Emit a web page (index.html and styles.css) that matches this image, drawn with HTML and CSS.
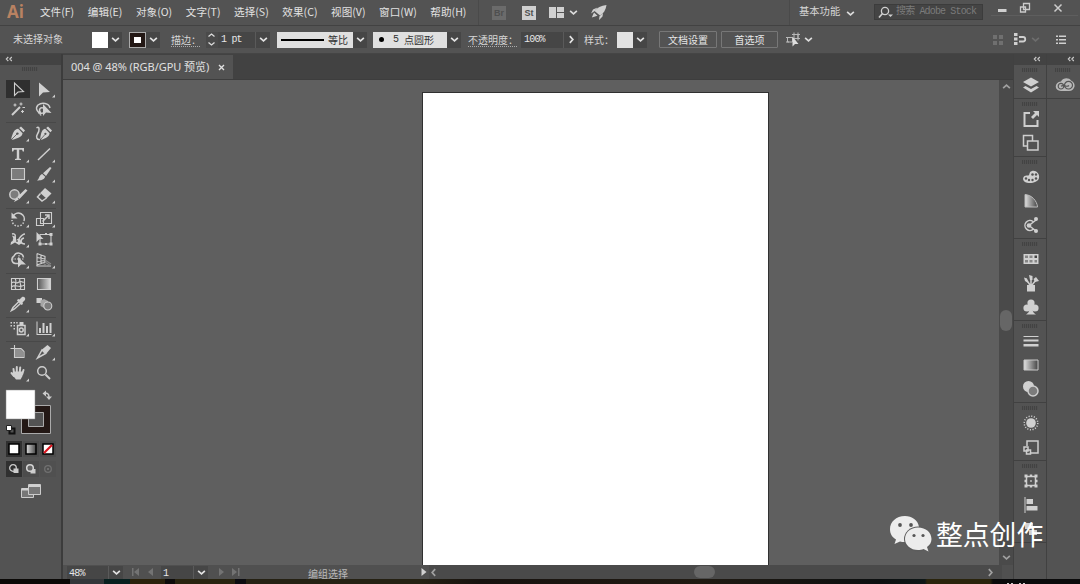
FILE: index.html
```html
<!DOCTYPE html>
<html lang="zh-CN">
<head>
  <meta charset="UTF-8">
  <title>004 @ 48%</title>
  <link rel="stylesheet" href="styles.css">
</head>
<body>

  <!-- Shared symbols -->
  <svg class="defs" width="0" height="0">
    <defs>
      <symbol id="chev" viewBox="0 0 8 8"><path d="M1 2.5 L4 5.2 L7 2.5" fill="none" stroke="currentColor" stroke-width="1.5"/></symbol>
      <symbol id="dbl" viewBox="0 0 8 6"><path d="M3.3 1 L1.3 3 L3.3 5 M6.8 1 L4.8 3 L6.8 5" fill="none" stroke="currentColor" stroke-width="1.1"/></symbol>
      <symbol id="more" viewBox="-13 -10 26 20"><path d="M11 5.500 V8.500 H8Z"/></symbol>
      <linearGradient id="gradH"><stop offset="0" stop-color="#5a5a5a"/><stop offset="1" stop-color="#d5d5d5"/></linearGradient>
      <linearGradient id="gradD"><stop offset="0" stop-color="#e0e0e0"/><stop offset="1" stop-color="#444"/></linearGradient>
    </defs>
  </svg>

  <!-- Menu bar -->
  <header class="menubar">
    <div class="logo">Ai</div>
    <ul class="menu">
      <li>文件(F)</li>
      <li>编辑(E)</li>
      <li>对象(O)</li>
      <li>文字(T)</li>
      <li>选择(S)</li>
      <li>效果(C)</li>
      <li>视图(V)</li>
      <li>窗口(W)</li>
      <li>帮助(H)</li>
    </ul>
    <div class="apps">
      <span class="app dim">Br</span>
      <span class="app">St</span>
      <svg class="layout-icon" width="16" height="11" viewBox="0 0 16 11"><path d="M0 0H7V11H0Z M8 0H15V5H8Z M8 6H15V11H8Z"/></svg>
      <svg class="chev" width="9" height="9"><use href="#chev"/></svg>
      <svg class="rocket" width="16" height="15" viewBox="0 0 16 15"><path d="M15.500 0 C10 .5 6 2.500 3.500 6 L9 10.500 C12.500 8.500 14.800 5 15.500 0Z M6.500 2.500 L2 4.500 L0 8.500 L3 6.500Z M12 8.500 L11.500 11.500 L8 15 L8.500 11.200Z M3 7.500 L.8 12.500 L6.500 10.800Z"/></svg>
    </div>
    <div class="workspace">基本功能<svg class="chev" width="9" height="9"><use href="#chev"/></svg></div>
    <div class="search">
      <svg width="16" height="13" viewBox="0 0 16 13"><circle cx="7" cy="5" r="3.600" fill="none" stroke="#d0d0d0" stroke-width="1.300"/><path d="M4.500 7.500 L1 11.500" stroke="#d0d0d0" stroke-width="1.700"/><path d="M10 8.500H15L12.500 11Z"/></svg>
      <span>搜索 Adobe Stock</span>
    </div>
    <div class="window-buttons">
      <span><svg width="12" height="12" viewBox="0 0 12 12"><path d="M2 7H10.500V10H2Z"/></svg></span>
      <span class="mid"><svg width="12" height="12" viewBox="0 0 12 12"><path d="M4.500 1.500H10.500V7.500H4.500Z M1.500 5H6.500V10H1.500Z" fill="none" stroke="#ccc" stroke-width="1.300"/></svg></span>
      <span class="wide"><svg width="12" height="12" viewBox="0 0 12 12"><path d="M2.500 2.500 L9.500 9.500 M9.500 2.500 L2.500 9.500" stroke="#ccc" stroke-width="1.500"/></svg></span>
    </div>
  </header>

  <!-- Control bar -->
  <div class="controls">
    <span class="selection">未选择对象</span>
    <span class="swatch"></span><span class="dd"><svg width="9" height="9"><use href="#chev"/></svg></span>
    <span class="swatch stroke"></span><span class="dd"><svg width="9" height="9"><use href="#chev"/></svg></span>
    <span class="link label-stroke">描边：</span>
    <span class="spin"><svg width="9" height="15" viewBox="0 0 9 15"><path d="M1.500 4.500L4.500 2L7.500 4.500 M1.500 10.500L4.500 13L7.500 10.500" fill="none" stroke="#ddd" stroke-width="1.300"/></svg></span>
    <span class="field pt">1 pt</span><span class="dd"><svg width="9" height="9"><use href="#chev"/></svg></span>
    <span class="preview profile"><i class="line"></i>等比</span><span class="dd"><svg width="9" height="9"><use href="#chev"/></svg></span>
    <span class="preview brush"><i class="dot"></i><b>5</b>点圆形</span><span class="dd"><svg width="9" height="9"><use href="#chev"/></svg></span>
    <span class="link label-opacity">不透明度：</span>
    <span class="field opacity">100%</span><span class="dd right"><svg width="9" height="9"><use href="#chev"/></svg></span>
    <span class="label-style">样式：</span>
    <span class="swatch style"></span><span class="dd"><svg width="9" height="9"><use href="#chev"/></svg></span>
    <button class="doc">文档设置</button>
    <button>首选项</button>
    <svg class="similar" width="15" height="15" viewBox="0 0 15 15"><path d="M1.500 5.500H6.500V10H1.500Z M8 2.500H12V6.500H8Z M8 .5V2.500 M12 .5V8.500 M6 2.500H14 M0 5.500H2 M0 10H3 M10 6.500H14" fill="none" stroke="#b8b8b8"/><path d="M6.500 4.500V14.500L9 12L12.500 12Z" fill="#ddd"/></svg>
    <svg class="chev" width="9" height="9"><use href="#chev"/></svg>
    <svg class="snap-grid" width="12" height="12" viewBox="0 0 12 12"><path d="M1 1H5V5H1Z M7 1H11V5H7Z M1 7H5V11H1Z M7 7H11V11H7Z"/></svg>
    <svg class="snap" width="14" height="13" viewBox="0 0 14 13"><path d="M1 0H4.500V3H1Z M1 4.500H4.500V7.500H1Z M1 9H4.500V12H1Z"/><path d="M6 4H10A2 2 0 0 1 10 8.500H6" fill="none" stroke="#d0d0d0" stroke-width="1.800"/></svg>
    <svg class="chev dim" width="9" height="9"><use href="#chev"/></svg>
    <svg class="list" width="11" height="10" viewBox="0 0 11 10"><path d="M0 .5H2V2H0Z M0 4H2V5.500H0Z M0 7.500H2V9H0Z M3 .5H10V2H3Z M3 4H10V5.500H3Z M3 7.500H10V9H3Z"/></svg>
  </div>

  <main class="work">

    <!-- Tools -->
    <aside class="tools">
      <div class="dock-head"><svg width="8" height="6"><use href="#dbl"/></svg></div>
      <div class="grip"></div>

      <div class="tool-groups">
        <div class="group">
          <svg class="tool on" viewBox="-12 -9 24 18"><path class="o" d="M-3.500 -6 V6.500 L0 3 L5.500 2.500Z"/></svg>
          <svg class="tool" viewBox="-13 -10 26 20"><path d="M-5 -6.500 V7.500 L-1 3.500 L6 3Z"/><use href="#more" x="-13" y="-10" width="26" height="20"/></svg>
          <svg class="tool" viewBox="-13 -10 26 20"><path class="o w2" d="M-6 6 L2 -2"/><path class="o" d="M3 -6.500V-3.500 M1.500 -5H4.500 M-3 -5.500V-2.500 M-4.500 -4H-1.500 M4.500 -1.500H7 M4.500 1V4 M3 2.500H6"/></svg>
          <svg class="tool" viewBox="-13 -10 26 20"><path class="o w1" d="M-1 4 C-7 5 -9 -1 -6 -4 C-2 -7 5 -6 6 -1 M-3 5 C-6 1 -4 -2 -1 -1 M-6 4 L-3 3 M-5 3 L-3 6.500"/><path d="M-1 -5 V7 L2 3.500 L7.500 4Z"/></svg>
        </div>
        <div class="group">
          <svg class="tool" viewBox="-13 -10 26 20"><path d="M3 -6.500 L7 -2.500 L5.500 -.8 L1.200 -5Z M.2 -4.200 L4.600 .2 C4 4 0 5 -5.500 6.800 L-6.800 5.500 C-5 0 -4 -3.800 .2 -4.200Z"/><path class="cut" d="M-6.200 6.200 L-1 1"/><circle class="hole" cx="-.6" cy=".6" r="1.200"/><use href="#more" x="-13" y="-10" width="26" height="20"/></svg>
          <svg class="tool" viewBox="-13 -10 26 20"><path d="M4 -6.500 L8 -2.500 L6.500 -.8 L2.200 -5Z M1.200 -4.200 L5.600 .2 C5 4 2 5 -2.500 6.800 L-3.800 5.500 C-3 0 -2 -3.800 1.200 -4.200Z"/><path class="cut" d="M-3.200 6.200 L1 1.500"/><circle class="hole" cx="1.400" cy=".8" r="1.100"/><path class="o w1" d="M-7.500 -5 C-4 -7.500 -4.500 -2 -6.500 1 C-8.500 4 -7 7 -4 6.500"/></svg>
          <svg class="tool" viewBox="-13 -10 26 20"><path d="M-6 -6H6V-2.500H4.800L4 -4.300H1.200V4.500L3 5V6H-3V5L-1.200 4.500V-4.300H-4L-4.800 -2.500H-6Z"/><use href="#more" x="-13" y="-10" width="26" height="20"/></svg>
          <svg class="tool" viewBox="-13 -10 26 20"><path class="o w1" d="M-6 6 L6 -5.500"/><use href="#more" x="-13" y="-10" width="26" height="20"/></svg>
          <svg class="tool" viewBox="-13 -10 26 20"><path class="o grey" d="M-6.500 -5.500H6.500V5.500H-6.500Z"/><use href="#more" x="-13" y="-10" width="26" height="20"/></svg>
          <svg class="tool" viewBox="-13 -10 26 20"><path d="M6 -7 L7.500 -6 L2 2 L-1 -.8Z M-1.800 0 L1.200 2.800 C0 6 -3 6.500 -7 6.500 C-4.500 5 -5 1 -1.800 0Z"/><use href="#more" x="-13" y="-10" width="26" height="20"/></svg>
          <svg class="tool" viewBox="-13 -10 26 20"><circle class="o grey w1" cx="-3.500" cy="-.5" r="4.700"/><path d="M7.500 -6 L9.500 -4.500 L1.500 4 L-.8 2Z M-1.500 2.300 L.8 4.500 L-4 7Z"/><use href="#more" x="-13" y="-10" width="26" height="20"/></svg>
          <svg class="tool" viewBox="-13 -10 26 20"><path d="M1 -7 L7.500 -1.500 L2.500 3.500 L-3.800 -2Z"/><path class="o w1" d="M-3.500 -1.500 L-6.500 2 L-2 6 L2.500 3"/><use href="#more" x="-13" y="-10" width="26" height="20"/></svg>
        </div>
        <div class="group">
          <svg class="tool" viewBox="-13 -10 26 20"><path class="o w1" d="M-4.500 -3.500 A6 6 0 0 1 6 2"/><path class="o w1" stroke-dasharray="1.500 1.500" d="M5.500 3.500 A6 6 0 0 1 -6 1"/><path d="M-6.500 -6.500 V-.5 H-.5Z"/><use href="#more" x="-13" y="-10" width="26" height="20"/></svg>
          <svg class="tool" viewBox="-13 -10 26 20"><path class="o" d="M-7.500 -.5H-.5V6.500H-7.500Z M-3.500 -6.500H7.500V4.500H-3.500Z"/><path class="o w1" d="M-1.500 2.500 L4.500 -3.500 M1 -4H5V0"/><use href="#more" x="-13" y="-10" width="26" height="20"/></svg>
          <svg class="tool" viewBox="-13 -10 26 20"><path class="o w1" d="M-6 -5 C-2 -6 -2 -2 -4 0 C-6 3 -2 3 1 0 C3 -3 4 -5 7 -5 M6 -1 C2 0 2 5 7 5"/><path d="M-6 -3.500 L-2 -2 L-2 1 L2 0 L4 4 L1 6 L-3 3.500 L-7.500 6 L-7 3 L-4 1Z"/><circle class="hole" cx="-1" cy="2" r=".9"/><use href="#more" x="-13" y="-10" width="26" height="20"/></svg>
          <svg class="tool" viewBox="-13 -10 26 20"><path class="o" d="M-4 -4.500H7V5H-4Z"/><path d="M-7.500 -7V3L-4.500 0H-.5Z M5.500 -6H8.500V-3H5.500Z M5.500 3.500H8.500V6.500H5.500Z M-5.500 3.500H-2.500V6.500H-5.500Z M1 -6H3V-4H1Z M1 4H3V6H1Z"/></svg>
          <svg class="tool" viewBox="-13 -10 26 20"><path class="o w1" d="M0 3.500 H-2.500 A4 4 0 0 1 -4 -4 A5 5 0 0 1 5.500 -2.500"/><path class="o" stroke-dasharray="1.500 1" d="M-6 -1H6 M1 -5 V-1"/><path d="M0 -3V7.500L3 4.500L8 4.500Z"/><use href="#more" x="-13" y="-10" width="26" height="20"/></svg>
          <svg class="tool" viewBox="-13 -10 26 20"><path class="o" d="M-7 -6.500V6 M-7 -6.500L1 -3.500V2L-7 5 M-3 -5V3.500 M-7 -2.500L1 -1 M-7 1.500L1 .5"/><path d="M-7.500 5.500H7V6.500H-7.500Z"/><path class="o faint" d="M1 2L7 6 M-1 3L3 6 M1 0L7 4"/><use href="#more" x="-13" y="-10" width="26" height="20"/></svg>
        </div>
        <div class="group">
          <svg class="tool" viewBox="-13 -10 26 20"><path class="o" d="M-6.500 -5.500H6.500V5.500H-6.500Z M-6.500 -1 C-3 -4 -2 1 1 -2 C3 -4 4 -1 6.500 -2 M-6.500 3 C-2 -1 0 5 6.500 1 M-3 -5.500 C0 -2 -5 2 -2 5.500 M2 -5.500 C0 -2 5 1 2 5.500"/></svg>
          <svg class="tool" viewBox="-13 -10 26 20"><path class="o" fill="url(#gradH)" d="M-6.500 -5.500H6.500V5.500H-6.500Z"/><path fill="url(#gradH)" d="M-6 -5H6V5H-6Z"/></svg>
          <svg class="tool" viewBox="-13 -10 26 20"><path class="o w1" d="M1 -2.500 L-5 3.500 L-6.500 6.500 L-3.500 5 L3 -1"/><path d="M0 -5 L1.500 -4.500 L4 -7 C6 -8 8 -6 7 -4 L4.500 -1.500 L5 0 L3.500 1 L-1 -3.500Z"/><use href="#more" x="-13" y="-10" width="26" height="20"/></svg>
          <svg class="tool" viewBox="-13 -10 26 20"><path d="M-7.500 -6H-2V-1H-7.500Z"/><path fill="#a5a5a5" d="M-3.500 -3.500 L0 -5 L4 -3 V2 L0 4 L-3.500 2Z"/><circle class="o grey" cx="3.800" cy="2" r="4"/></svg>
        </div>
        <div class="group">
          <svg class="tool" viewBox="-13 -10 26 20"><path class="o w1" d="M-.5 -2.500H7V6.500H-.5Z"/><path d="M1.500 -6H5.500V-3H1.500Z M-7.500 -6H-6V-4.500H-7.500Z M-4.500 -6H-3V-4.500H-4.500Z M-1.800 -6H-.3V-4.500H-1.800Z M-7.500 -3H-6V-1.500H-7.500Z M-4.500 -3H-3V-1.500H-4.500Z M-4.500 0H-3V1.500H-4.500Z"/><circle class="o w1" cx="3.300" cy="2" r="1.900"/><use href="#more" x="-13" y="-10" width="26" height="20"/></svg>
          <svg class="tool" viewBox="-13 -10 26 20"><path d="M-7.500 -6.500H-6.500V6H7.500V7H-7.500Z M-5 0H-3V5H-5Z M-1.500 -5H.5V5H-1.500Z M2 -2H4V5H2Z M5.500 -5H7.500V5H5.500Z"/><use href="#more" x="-13" y="-10" width="26" height="20"/></svg>
        </div>
        <div class="group">
          <svg class="tool" viewBox="-13 -10 26 20"><path class="o" d="M-7.500 -3.500H3 M-3.500 -7V5.500H6V-.5L3 -3.500"/><path fill="#909090" d="M-3 -3H2.500L5.500 0V5H-3Z"/></svg>
          <svg class="tool" viewBox="-13 -10 26 20"><path class="o w1" d="M-6.500 6 L-2 -2 L1.500 1.500Z"/><path d="M-2 -2.500 L3.500 -7 L7 -4 L2 2Z"/><use href="#more" x="-13" y="-10" width="26" height="20"/></svg>
          <svg class="tool" viewBox="-13 -10 26 20"><path class="o w2" d="M-4 0L-4.500 -4 M-1.200 -1V-6 M1.800 -1L2.200 -5.500 M4.300 1L5.500 -3 M-4 3L-6.500 0" stroke-linecap="round"/><path d="M-5 -1.500H5.200L4.500 3L2.500 6.500H-2L-5.500 2Z"/><use href="#more" x="-13" y="-10" width="26" height="20"/></svg>
          <svg class="tool" viewBox="-13 -10 26 20"><circle class="o w1" cx="-2" cy="-2" r="4.300"/><path class="o w2" d="M1.500 1.500L6 6"/></svg>
        </div>
      </div>

      <!-- Fill / stroke -->
      <svg class="fill-stroke" width="56" height="47" viewBox="0 0 56 47">
        <path d="M21.500 17.500H50.500V45.500H21.500Z" fill="#231815" stroke="#aaa"/>
        <path d="M28.500 24.500H43.500V38.500H28.500Z" fill="#535353" stroke="#aaa"/>
        <path d="M6 2H35V31H6Z" fill="#fff" stroke="#8a8a8a" stroke-width=".5"/>
        <path d="M46 5 H45 M45 5 C48 5 49 6.500 49 9" fill="none" stroke="#ccc" stroke-width="1.300"/>
        <path d="M42.500 5.500L46 2.500V8.500Z M46 8.500H52L49 12Z" fill="#ccc"/>
        <path d="M9.500 40.500H14.500V45.500H9.500Z" fill="none" stroke="#111" stroke-width="2"/>
        <path d="M6.500 37.500H11.500V42.500H6.500Z" fill="#fff" stroke="#222"/>
      </svg>
      <div class="modes colors">
        <span class="on"><svg width="12" height="12"><path d="M1 1H11V11H1Z" fill="#fff" stroke="#000" stroke-width="1.500"/></svg></span>
        <span><svg width="12" height="12"><path d="M1 1H11V11H1Z" fill="url(#gradD)" stroke="#000" stroke-width="1.500"/></svg></span>
        <span><svg width="12" height="12"><path d="M1 1H11V11H1Z" fill="#fff" stroke="#000" stroke-width="1.500"/><path d="M2 10L10 2" stroke="#d8121b" stroke-width="2.200"/></svg></span>
      </div>
      <div class="modes">
        <span class="on"><svg width="12" height="12"><circle cx="5" cy="5" r="3.300" fill="none" stroke="#ccc" stroke-width="1.300"/><path d="M5.500 5.500H10.500V10H5.500Z" fill="#ccc"/></svg></span>
        <span><svg width="12" height="12"><path d="M5.500 6H10.500V10.500H5.500Z" fill="#ccc"/><circle cx="5" cy="5" r="3.300" fill="#666" stroke="#d5d5d5" stroke-width="1.500"/></svg></span>
        <span class="off"><svg width="12" height="12"><circle cx="6" cy="6" r="3.300" fill="none" stroke="#707070" stroke-width="1.300"/><path d="M5 5H7V7H5Z" fill="#707070"/></svg></span>
      </div>
      <svg class="screen-mode" width="20" height="15" viewBox="0 0 20 15"><path d="M.5 4.500H12.500V13.500H.5Z" fill="#777" stroke="#ccc"/><path d="M1 4H12V6.500H1Z"/><path d="M7.500 .5H19.500V10.500H7.500Z" fill="#777" stroke="#ccc"/><path d="M8 .5H19V3H8Z"/></svg>
    </aside>

    <!-- Document -->
    <section class="document">
      <div class="tabs">
        <div class="tab"><span>004 @ 48% (RGB/GPU 预览)</span><svg width="7" height="7" viewBox="0 0 7 7"><path d="M1 1L6 6M6 1L1 6" stroke="#e0e0e0" stroke-width="1.400"/></svg></div>
      </div>
      <div class="view">
        <div class="canvas"><div class="artboard"></div></div>
        <div class="vscroll">
          <svg class="up" width="9" height="9"><use href="#chev"/></svg>
          <i class="thumb"></i>
          <svg width="9" height="9"><use href="#chev"/></svg>
        </div>
      </div>
      <div class="status">
        <span class="field zoom">48%</span><span class="dd"><svg width="9" height="9"><use href="#chev"/></svg></span>
        <svg class="nav-left" width="24" height="8" viewBox="0 0 24 8"><path d="M1 0H2.500V8H1Z M8 0V8L3 4Z M22 0V8L17 4Z"/></svg>
        <span class="field page">1</span><span class="dd"><svg width="9" height="9"><use href="#chev"/></svg></span>
        <svg class="nav-right" width="24" height="8" viewBox="0 0 24 8"><path d="M2 0V8L7 4Z M15 0V8L20 4Z M21 0H22.500V8H21Z"/></svg>
        <span class="mode-name">编组选择</span>
        <svg class="play" width="6" height="8" viewBox="0 0 6 8"><path d="M0 0V8L5 4Z"/></svg>
        <div class="hscroll">
          <svg class="left" width="9" height="9"><use href="#chev"/></svg>
          <i class="thumb"></i>
          <svg class="right" width="9" height="9"><use href="#chev"/></svg>
        </div>
      </div>
    </section>

    <!-- Panel dock -->
    <aside class="dock">
      <div class="dock-head"><svg width="8" height="6"><use href="#dbl"/></svg></div>
      <div class="panel">
        <svg viewBox="-12 -12 24 24"><path d="M0 -7.500L8 -3L0 1.500L-8 -3Z M-5.500 1L0 4L5.500 1L8 2.500L0 7.500L-8 2.500Z"/></svg>
      </div>
      <div class="panel">
        <svg viewBox="-12 -12 24 24"><path class="o w2" d="M-1 -6H-6.500V7H6.500V1"/><path d="M2 -8H8V-2L6 -4L2 0L0 -2L4 -6Z"/></svg>
        <svg viewBox="-12 -12 24 24"><path class="o w1" d="M-7.500 -7.500H1.500V3H-7.500Z"/><path class="o w1 base" d="M-3.500 -2H7V7H-3.500Z"/></svg>
      </div>
      <div class="panel">
        <svg viewBox="-12 -12 24 24"><path d="M1 -6 C5 -7 9 -3 8 1 C7 6 -2 7 -6 5 C-10 2 -7 -2 -4 -1.500 C0 -1 -3 -5 1 -6Z"/><g class="hole"><circle cx="1.500" cy="-2.500" r="1.300"/><circle cx="5" cy="-2.500" r="1.200"/><circle cx="5" cy="1.500" r="1.200"/><circle cx="1.500" cy="3" r="1.200"/><circle cx="-2" cy="3" r="1.200"/><circle cx="-5" cy="1.500" r="1.200"/></g></svg>
        <svg viewBox="-12 -12 24 24"><path fill="url(#gradD)" stroke="#bbb" d="M-6 -6.500 C1 -6 6 0 6.500 6H-6Z"/></svg>
        <svg viewBox="-12 -12 24 24"><path class="o w1" d="M2.500 4 A5 5 0 1 1 2 -3.500 M-2 .5L5 -5 M-2 .5L5 6"/><circle cx="-2" cy=".5" r="2.300"/><circle cx="5" cy="-6" r="2"/><circle cx="5" cy="6" r="2"/></svg>
      </div>
      <div class="panel">
        <svg viewBox="-12 -12 24 24"><path d="M-7.500 -5H7.500V5H-7.500Z"/><path fill="#858585" d="M-6 -3.500H-3V-1H-6Z M-1.500 -3.500H1.500V-1H-1.500Z M-6 1H-3V3.500H-6Z M3.500 1H6V3.500H3.500Z M-1.500 1H1.500V3.500H-1.500Z"/><path fill="#444" d="M3.500 -3.500H6V-1H3.500Z"/></svg>
        <svg viewBox="-12 -12 24 24"><path d="M-4 2H4V8.500H-4Z"/><path class="o w1" d="M-1 2L-5 -4 M0 2V-5 M1 2L5 -3"/><path d="M-7 -5.500L-4 -4.500L-3 0L-6 -2Z M-2 -8L1.500 -7V-3H-1Z M2.500 -4L5 -6L8 -2L4 -1Z"/></svg>
        <svg viewBox="-12 -12 24 24"><circle cx="0" cy="-4" r="3.600"/><circle cx="-4" cy="1" r="3.600"/><circle cx="4" cy="1" r="3.600"/><path d="M-1 -2H1C1 3 2 6 5 7.500H-5C-2 6 -1 3 -1 -2Z"/></svg>
      </div>
      <div class="panel">
        <svg viewBox="-12 -12 24 24"><path d="M-7.500 -5H7.500V-4H-7.500Z M-7.500 -1.500H7.500V.5H-7.500Z M-7.500 3H7.500V5.500H-7.500Z"/></svg>
        <svg viewBox="-12 -12 24 24"><path stroke="#c8c8c8" fill="url(#gradD)" d="M-7 -5H7V5H-7Z"/></svg>
        <svg viewBox="-12 -12 24 24"><circle cx="-2.500" cy="-2.500" r="5.500"/><circle class="o grey w1" cx="2" cy="2" r="5"/></svg>
      </div>
      <div class="panel">
        <svg viewBox="-12 -12 24 24"><circle cx="0" cy="0" r="4.800"/><circle class="o w1" cx="0" cy="0" r="6.800" stroke-dasharray="1.100 1.570"/></svg>
        <svg viewBox="-12 -12 24 24"><path class="o w1" d="M-4 -1V-6H7V6H-1"/><path class="o w1" d="M-7 0H-3V4H-7Z"/><path class="o w1" d="M-4.500 3H-.5V7H-4.500Z"/></svg>
      </div>
      <div class="panel">
        <svg viewBox="-12 -12 24 24"><path class="o w1" d="M-4.500 -4.500H4.500V4.500H-4.500Z"/><path d="M-6.500 -6.500H-3.500V-3.500H-6.500Z M3.500 -6.500H6.500V-3.500H3.500Z M-6.500 3.500H-3.500V6.500H-6.500Z M3.500 3.500H6.500V6.500H3.500Z M-1.200 -6.500H1.200V-4H-1.200Z M-1.200 4H1.200V6.500H-1.200Z M-6.500 -1.200H-4V1.200H-6.500Z M4 -1.200H6.500V1.200H4Z M-.8 -.8H.8V.8H-.8Z"/></svg>
        <svg viewBox="-12 -12 24 24"><path d="M-6.500 -8H-5.500V8H-6.500Z M-4.500 -6H2V-1H-4.500Z M-4.500 1H6.500V5.500H-4.500Z"/></svg>
        <svg viewBox="-12 -12 24 24"><path d="M-6 -6H2V0H-6Z M-2 1H6V6H-2Z"/></svg>
      </div>
    </aside>
    <aside class="dock second">
      <div class="dock-head"><svg width="8" height="6"><use href="#dbl"/></svg></div>
      <div class="panel">
        <svg viewBox="-12 -12 24 24"><path fill="#b8b8b8" d="M-4 -3.500 C-2 -7.500 4 -7.500 6 -4.500 C12 -2 10 6 4 6H-4 C-11 6 -11 -3 -4 -3.500Z"/><g fill="none" stroke="#555" stroke-width="1.200"><circle cx="-4" cy="1.200" r="2.800"/><ellipse cx="3.500" cy=".2" rx="4" ry="3.800"/><path d="M-4 1.200 C-1 -1 1 3 4 .5"/></g></svg>
      </div>
    </aside>
  </main>

  <div class="desktop-edge"></div>

  <!-- Watermark -->
  <div class="watermark">
    <svg width="44" height="38" viewBox="0 0 44 38">
      <path d="M16 1 C7 1 1 7 1 14 C1 19 3 22 7 24.500 L5.500 29 L11 26.500 C13 27 15 27.300 17 27 L30 12 C29 5 23 1 16 1Z" fill="#ececec"/>
      <ellipse cx="29" cy="24" rx="14" ry="12.500" fill="#5c5c5c"/>
      <path d="M29 12.500 C21.500 12.500 16 17.500 16 24 C16 30 21.500 35 29 35 C31 35 33 34.700 34.500 34 L39.500 36.500 L38 32 C41 30 42.500 27 42.500 24 C42.500 17.500 37 12.500 29 12.500Z" fill="#ececec"/>
      <g fill="#555"><circle cx="11" cy="10" r="1.900"/><circle cx="22" cy="10" r="1.900"/><circle cx="25" cy="20.500" r="1.600"/><circle cx="34" cy="20.500" r="1.600"/></g>
    </svg>
    <span>整点创作</span>
  </div>
</body>
</html>
```
FILE: styles.css
```css
* {
  margin: 0;
  padding: 0;
  box-sizing: border-box;
}

body {
  width: 1080px;
  height: 584px;
  overflow: hidden;
  display: flex;
  flex-direction: column;
  background: #535353;
  color: #d6d6d6;
  font-family: "Noto Sans CJK SC", sans-serif;
  font-size: 10px;
}

svg {
  display: block;
  flex: none;
  fill: #d0d0d0;
}

.defs {
  position: absolute;
}

.o {
  fill: none;
  stroke: #cecece;
  stroke-width: 1.1;
}

.w1 { stroke-width: 1.5; }
.w2 { stroke-width: 2; }
.faint { stroke: #888; }
.grey { fill: #7c7c7c; }
.base { fill: #535353; }
.hole { fill: #535353; }
.cut { stroke: #535353; stroke-width: 0.8; }

.chev {
  color: #dcdcdc;
}

/* menu bar */
.menubar {
  height: 26px;
  flex: none;
  display: flex;
  border-bottom: 1px solid #424242;
  white-space: nowrap;
}

.logo {
  width: 40px;
  padding-left: 7px;
  color: #b98262;
  font: bold 17px/23px "Open Sans", sans-serif;
}

.menu {
  display: flex;
  list-style: none;
  width: 438px;
  gap: 13.6px;
  font-size: 10.6px;
  line-height: 24px;
  color: #e2e2e2;
}

.apps {
  display: flex;
  align-items: center;
  height: 25px;
  padding-left: 13px;
  border-left: 1px solid #4a4a4a;
  width: 311px;
}

.app {
  width: 14px;
  height: 14px;
  margin-right: 16px;
  background: #cfcfcf;
  color: #505050;
  font: bold 9px/14px "Liberation Sans", sans-serif;
  text-align: center;
}

.app.dim {
  background: #6b6b6b;
  color: #4f4f4f;
}

.app + .layout-icon { margin-left: -3px; }
.layout-icon + .chev { margin-left: 4px; }
.rocket { margin-left: 13px; }

.workspace {
  display: flex;
  width: 85px;
  padding-left: 9px;
  font-size: 10.3px;
  line-height: 22px;
  border-left: 1px solid #4a4a4a;
}

.workspace .chev {
  margin: 9px 0 0 6px;
}

.search {
  width: 109px;
  height: 16px;
  margin-top: 4px;
  padding-left: 3px;
  display: flex;
  align-items: center;
  background: #444;
  border: 1px solid #3c3c3c;
  color: #7b7b7b;
  font: 10px/14px "Liberation Mono", "Noto Sans CJK SC", monospace;
  letter-spacing: -0.85px;
}

.search span {
  padding-left: 2px;
}

.window-buttons {
  display: flex;
  height: 16px;
  margin-left: 8px;
  border-bottom: 1px solid #5e5e5e;
}

.window-buttons span {
  width: 22px;
  display: flex;
  align-items: center;
  justify-content: center;
}

.window-buttons .mid { width: 24px; }
.window-buttons .wide { width: 41px; }

/* control bar */
.controls {
  height: 28px;
  flex: none;
  display: flex;
  align-items: center;
  padding-left: 13px;
  border-bottom: 1px solid #454545;
  white-space: nowrap;
}

.controls > * {
  flex: none;
}

.selection {
  width: 79px;
  margin-top: -3px;
}

.swatch {
  width: 16px;
  height: 16px;
  background: #fff;
}

.swatch.stroke {
  margin-left: 7px;
  width: 17px;
  background: #fff;
  border: 5px solid #231815;
  outline: 1px solid #aaa;
  outline-offset: -1px;
}

.swatch.style {
  background: #e2e2e2;
}

.dd {
  width: 14px;
  height: 16px;
  display: flex;
  align-items: center;
  justify-content: center;
  background: #464646;
  color: #e2e2e2;
}

.dd.right svg,
.hscroll .right {
  transform: rotate(-90deg);
}

.field {
  height: 16px;
  padding-left: 3px;
  background: #464646;
  border-right: 1px solid #5a5a5a;
  color: #e6e6e6;
  font: 10px/16px "Liberation Mono", monospace;
  letter-spacing: -0.8px;
}

.link {
  height: 14px;
  line-height: 13px;
  border-bottom: 1px dotted #aaa;
}

.label-stroke { margin-left: 11px; width: 29px; }
.spin { width: 12px; margin-left: 6px; padding-left: 1px; height: 16px; background: #4a4a4a; }
.pt { width: 38px; }

.preview {
  height: 16px;
  display: flex;
  align-items: center;
  margin-left: 7px;
  background: #e0e0e0;
  color: #333;
}

.profile {
  width: 76px;
  padding-left: 4px;
}

.profile .line {
  width: 43px;
  height: 2px;
  margin-right: 4px;
  background: #000;
}

.brush {
  width: 74px;
  margin-left: 6px;
  padding-left: 6px;
}

.brush .dot {
  width: 5px;
  height: 5px;
  border-radius: 50%;
  background: #000;
}

.brush b {
  width: 20px;
  padding-left: 9px;
  font: 10px "Liberation Mono", monospace;
}

.label-opacity { margin-left: 7px; width: 49px; }
.opacity { width: 43px; margin-left: 4px; }
.label-style { margin-left: 6px; width: 33px; }

.controls button {
  width: 57px;
  height: 17px;
  margin-left: 4px;
  background: none;
  border: 1px solid #777;
  border-radius: 1px;
  color: #e6e6e6;
  font: 10px/14px "Noto Sans CJK SC", sans-serif;
}

.controls button.doc {
  width: 58px;
  margin-left: 12px;
}

.similar { margin-left: 8px; }
.similar + .chev { margin-left: 3px; }
.snap-grid { margin-left: 179px; fill: #707070; }
.snap { margin-left: 9px; }
.snap + .chev { margin-left: 4px; color: #6e6e6e; }
.list { margin-left: 16px; }

/* work area */
.work {
  height: 525px;
  flex: none;
  display: flex;
}

.dock-head {
  height: 11px;
  background: #434343;
  color: #ccc;
}

.tools {
  width: 63px;
  border-right: 2px solid #3c3c3c;
  background: #535353;
}

.tools .dock-head {
  padding: 2px 0 0 5px;
}

.grip {
  width: 16px;
  height: 4px;
  margin: 2px 0 0 22px;
  background: repeating-linear-gradient(90deg, #434343 0 1px, #505050 1px 2px);
}

.tool-groups {
  display: flex;
  flex-direction: column;
  gap: 3.5px;
  padding: 7.5px 0 0 5px;
}

.group {
  display: grid;
  grid-template-columns: 26px 26px;
  grid-auto-rows: 20.5px;
  width: 52px;
}

.group + .group {
  box-shadow: 0 -2px 0 -1px #484848;
}

.tool {
  width: 26px;
  height: 20px;
}

.tool.on {
  background: #2f2f2f;
  width: 24px;
  height: 18px;
  margin: 1px;
}

.fill-stroke {
  margin-top: 5px;
}

.modes {
  display: flex;
  gap: 1px;
  margin: 4px 0 0 6px;
}

.modes span {
  width: 16px;
  height: 16px;
  display: flex;
  align-items: center;
  justify-content: center;
  background: #4c4c4c;
}

.modes.colors {
  margin-top: 6px;
}

.modes .on { background: #303030; }
.modes .off { background: #505050; }

.screen-mode {
  margin: 7px 0 0 21px;
}

/* document */
.document {
  width: 950px;
  display: flex;
  flex-direction: column;
}

.tabs {
  height: 26px;
  background: #424242;
  border-bottom: 1px solid #3d3d3d;
}

.tab {
  width: 170px;
  height: 24px;
  margin-top: 1px;
  padding-left: 8px;
  display: flex;
  align-items: center;
  background: #535353;
  color: #e0e0e0;
  font: 11px/22px "Noto Sans", "Noto Sans CJK SC", sans-serif;
  letter-spacing: -0.05px;
  white-space: nowrap;
}

.tab span {
  width: 147px;
  margin-top: -1px;
}

.view {
  height: 485px;
  display: flex;
}

.canvas {
  width: 936px;
  padding: 12px 0 0 359px;
  background: #5f5f5f;
}

.artboard {
  width: 347px;
  height: 473px;
  background: #fff;
  border: 1px solid #303030;
  border-bottom: 0;
}

.vscroll {
  width: 14px;
  display: flex;
  flex-direction: column;
  align-items: center;
  padding-top: 2px;
  background: #4a4a4a;
  color: #a0a0a0;
}

.vscroll .up {
  transform: rotate(180deg);
}

.vscroll .thumb {
  width: 12px;
  height: 21px;
  margin: 219px 0 222px;
  border-radius: 6px;
  background: #666;
}

.status {
  height: 14px;
  display: flex;
  align-items: center;
  padding-left: 4px;
  background: #505050;
  white-space: nowrap;
}

.status .field {
  height: 13px;
  padding-left: 2px;
  line-height: 15px;
}

.status .dd {
  height: 13px;
}

.zoom { width: 42px; }
.page { width: 33px; }
.nav-left { margin: 0 6px 0 8px; fill: #737373; }
.nav-right { margin-left: 9px; fill: #737373; }
.mode-name { width: 112px; margin-left: 67px; line-height: 14px; padding-top: 3px; color: #b8b8b8; }
.play { width: 9px; }

.hscroll {
  width: 573px;
  height: 14px;
  display: flex;
  align-items: center;
  background: #4a4a4a;
  color: #a0a0a0;
}

.hscroll .left {
  transform: rotate(90deg);
}

.hscroll .thumb {
  width: 21px;
  height: 12px;
  margin: 0 271px 0 256px;
  border-radius: 6px;
  background: #666;
}

/* panel docks */
.dock {
  width: 34px;
  border-left: 1px solid #414141;
  border-right: 1px solid #414141;
  background: #535353;
}

.dock .dock-head {
  display: flex;
  justify-content: flex-end;
  padding: 2px 5px 0 0;
}

.dock.second {
  width: 33px;
  border-left: 0;
  border-right: 0;
}

.panel {
  padding: 8px 4px 1px 5px;
  border-bottom: 1px solid #414141;
  background: repeating-linear-gradient(90deg, #434343 0 1px, #505050 1px 2px) 8px 3px / 16px 4px no-repeat;
}

.dock:not(.second) .panel:nth-child(2) {
  height: 34px;
}

.panel svg {
  width: 24px;
  height: 24px;
}

.second .panel {
  height: 34px;
  padding-left: 6px;
}

/* strip under the window */
.desktop-edge {
  height: 5px;
  flex: none;
  background:
    radial-gradient(circle at 1008px 5px, #ccc 1px, transparent 1.5px),
    radial-gradient(circle at 1012px 5px, #ccc 1px, transparent 1.5px),
    radial-gradient(circle at 1020px 5px, #ccc 1px, transparent 1.5px),
    radial-gradient(circle at 1024px 5px, #ccc 1px, transparent 1.5px),
    linear-gradient(90deg, #0b0907 0 70px, #34373a 70px 104px, #08201f 104px 130px, #2b220c 130px 165px, #0d0b0a 165px 175px, #292410 175px 235px, #0c0c10 235px 246px, #252113 246px 420px, #17120f 480px, #201a12 700px, #0c0f10 880px, #0e1717 925px, #2a240c 927px 990px, #0a0a0b 993px);
}

.watermark {
  position: absolute;
  left: 889px;
  top: 515px;
  display: flex;
  color: #fff;
  font-size: 26.8px;
  line-height: 38px;
  white-space: nowrap;
}

.watermark span {
  margin-left: 3px;
}
```
